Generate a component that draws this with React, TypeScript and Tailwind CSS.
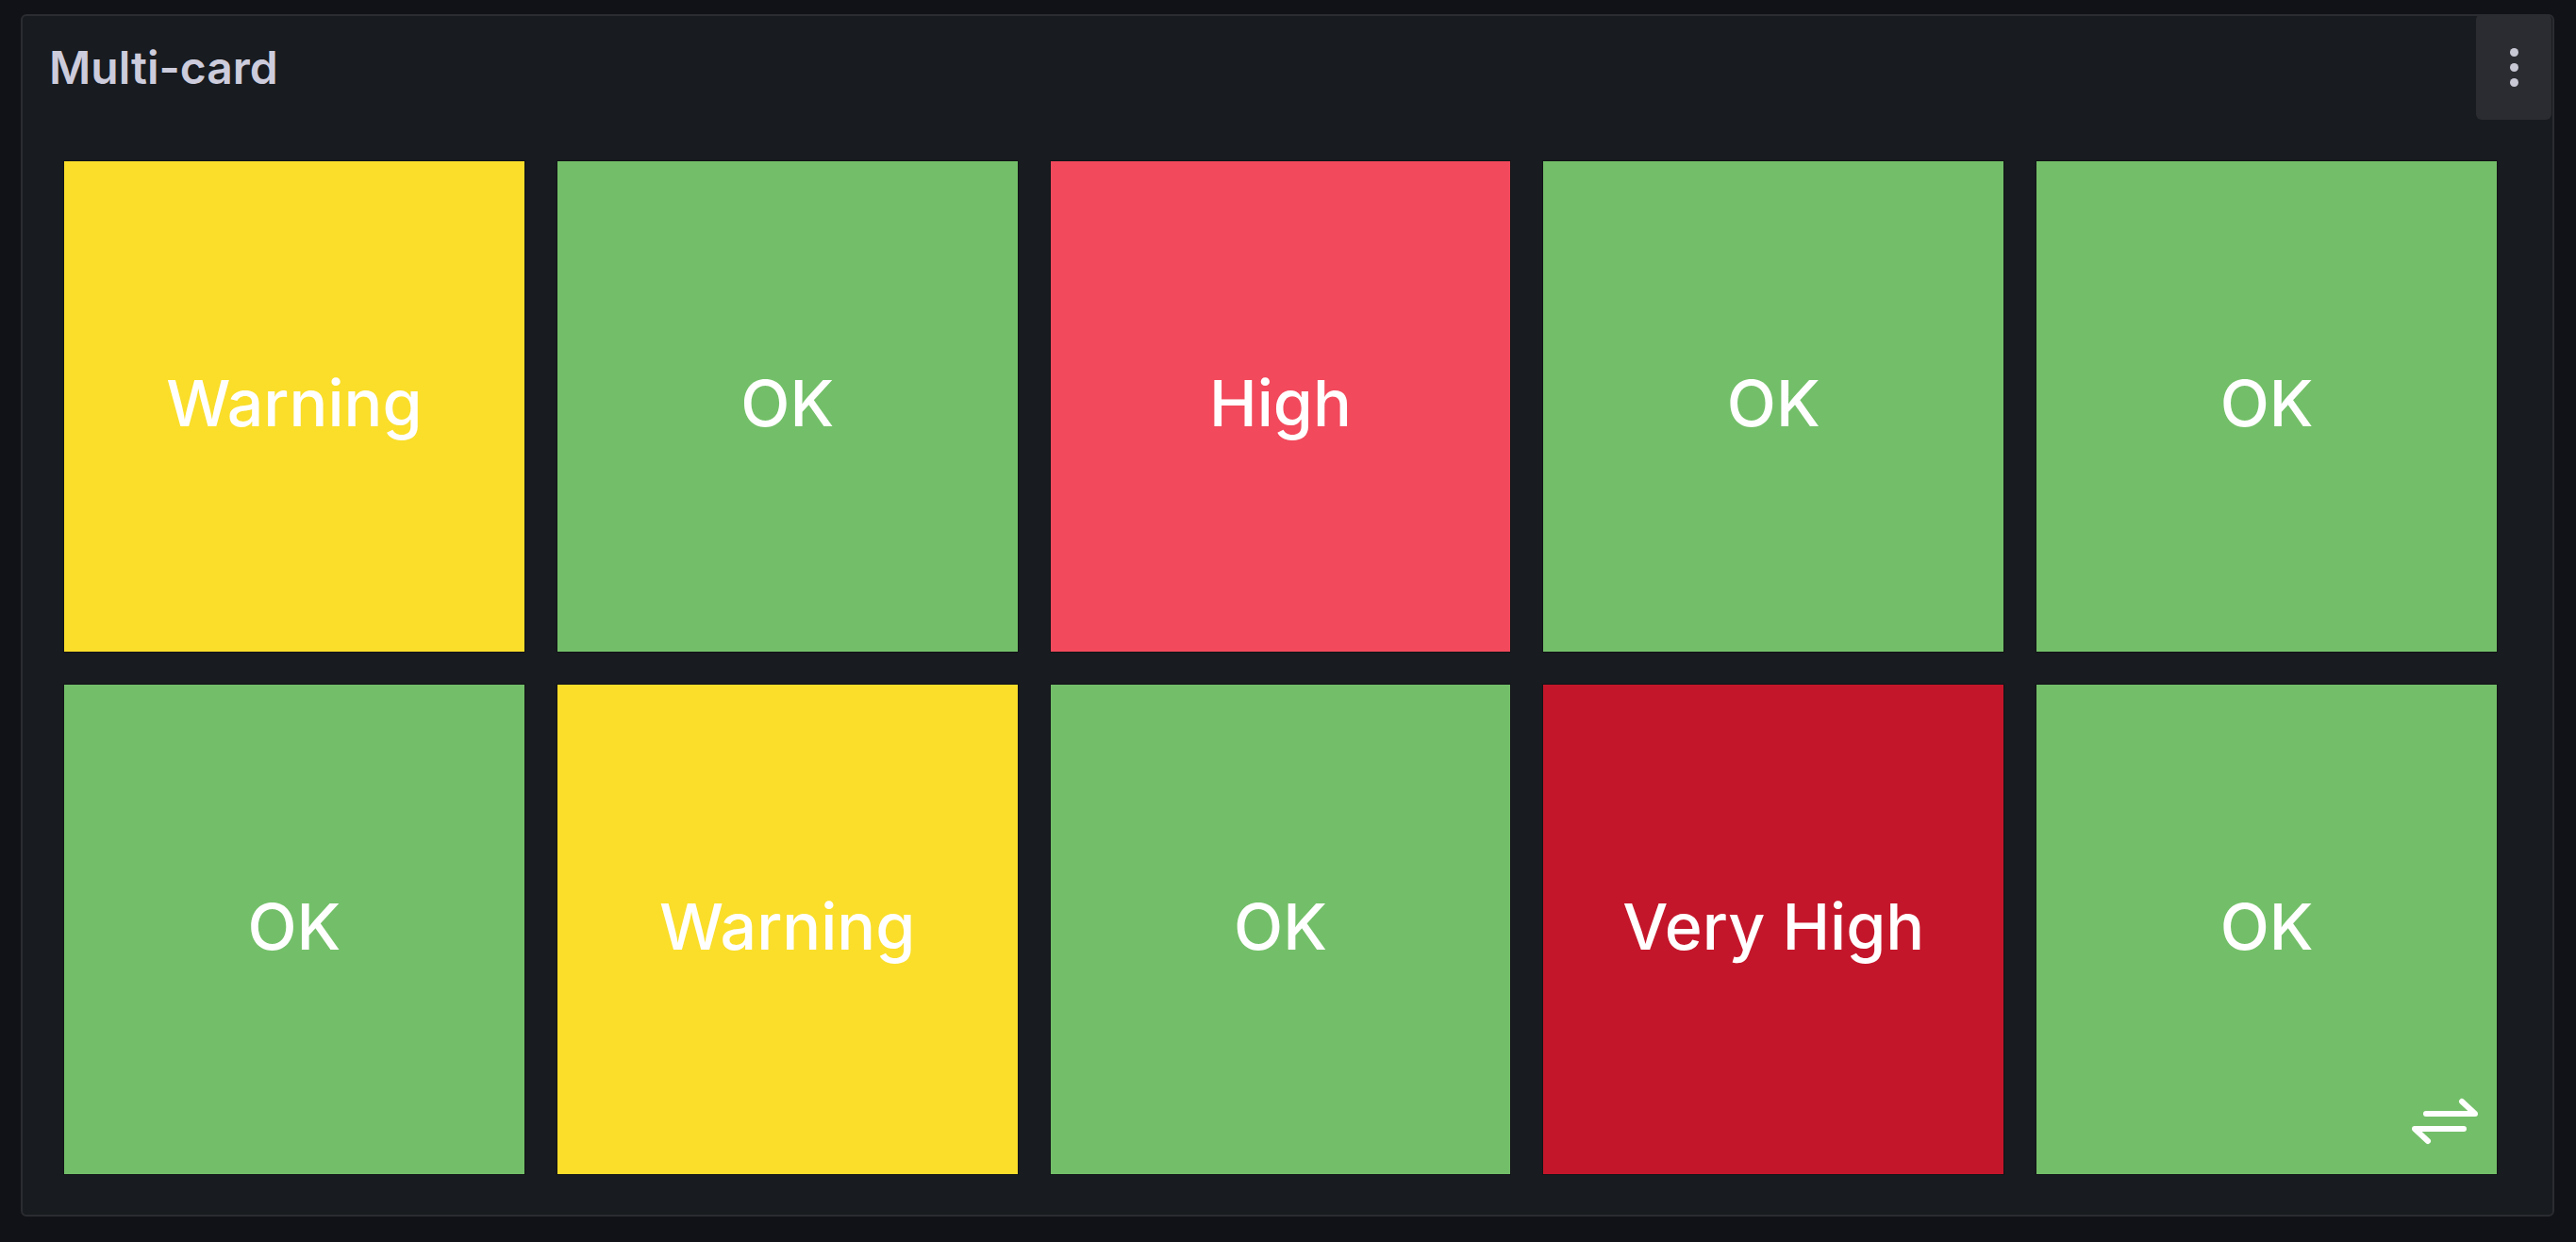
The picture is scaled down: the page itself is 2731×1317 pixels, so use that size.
import React from 'react';

type Level = 'ok' | 'warning' | 'high' | 'veryHigh';

// one tile per service, in row order
const tiles: Level[] = ['warning', 'ok', 'high', 'ok', 'ok', 'ok', 'warning', 'ok', 'veryHigh', 'ok'];

const look: Record<Level, { label: string; bg: string }> = {
  ok: { label: 'OK', bg: 'bg-[#73bf69]' },
  warning: { label: 'Warning', bg: 'bg-[#fade2a]' },
  high: { label: 'High', bg: 'bg-[#f2495c]' },
  veryHigh: { label: 'Very High', bg: 'bg-[#c4162a]' },
};

function SwapIcon() {
  return (
    <svg width="72" height="50" viewBox="0 0 72 50" fill="none" stroke="white" strokeWidth="6" strokeLinecap="round" strokeLinejoin="round">
      <path d="M16 17 H68 L54 4" />
      <path d="M56 33 H4 L18 46" />
    </svg>
  );
}

export default function App() {
  return (
    <div className="h-[1317px] w-full overflow-hidden bg-[#111217] pl-[22px] pr-[23px] pt-[15px] pb-[27px] font-['Inter','Noto_Sans',sans-serif]">
      <div className="flex h-full flex-col rounded-[6px] border-2 border-[#2a2c31] bg-[#181b1f]">
        <div className="flex h-[110px] shrink-0 items-start justify-between">
          <h2 className="pl-[28px] pt-[27px] text-[48px] leading-[56px] font-semibold text-[#ccccdc]">Multi-card</h2>
          <button className="mr-[1px] -mt-[2px] flex h-[112px] w-[80px] flex-col items-center justify-center gap-[7px] rounded-[6px] bg-[#2b2c31]">
            <span className="h-[9px] w-[9px] rounded-full bg-[#c8c8d4]" />
            <span className="h-[9px] w-[9px] rounded-full bg-[#c8c8d4]" />
            <span className="h-[9px] w-[9px] rounded-full bg-[#c8c8d4]" />
          </button>
        </div>
        <div className="relative flex-1 pl-[44px] pr-[59px] pt-[44px] pb-[43px]">
          <div className="grid h-full grid-cols-5 grid-rows-2 gap-[35px]">
            {tiles.map((lvl, i) => (
              <div
                key={i}
                className={`${look[lvl].bg} flex items-center justify-center pb-[7px] shadow-[0_0_0_1px_rgba(0,0,0,0.25)]`}
              >
                <span className="text-[68px] font-medium text-white">{look[lvl].label}</span>
              </div>
            ))}
          </div>
          <div className="absolute right-[78px] bottom-[74px]">
            <SwapIcon />
          </div>
        </div>
      </div>
    </div>
  );
}
